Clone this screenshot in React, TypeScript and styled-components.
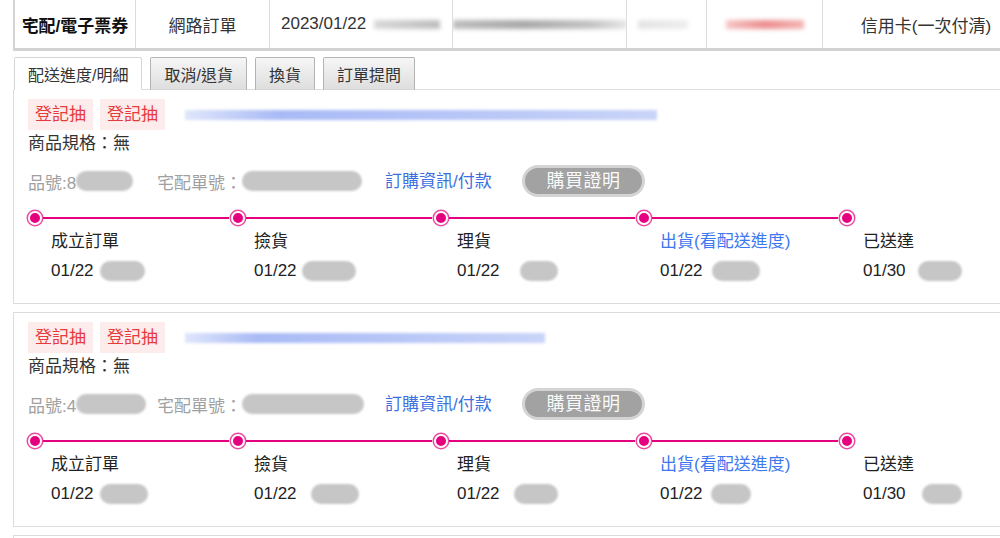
import React from "react";
import styled, { createGlobalStyle } from "styled-components";

const GlobalStyle = createGlobalStyle`
  html, body {
    margin: 0;
    padding: 0;
    background: #ffffff;
    overflow: hidden;
  }
  body {
    font-family: "Liberation Sans", "Noto Sans CJK TC", sans-serif;
    color: #333;
  }
`;

const Page = styled.div`
  width: 1030px;
  padding-left: 13px;
`;

/* ---------- order header row ---------- */

const HeaderRow = styled.div`
  display: flex;
  height: 48px;
  border-left: 2px solid #d4d4d4;
  border-bottom: 3px solid #d2d2d2;
  font-size: 17px;
`;

const Cell = styled.div<{ $w: number; $bold?: boolean; $left?: boolean }>`
  width: ${(p) => p.$w}px;
  flex-shrink: 0;
  display: flex;
  align-items: center;
  justify-content: ${(p) => (p.$left ? "flex-start" : "center")};
  padding-left: ${(p) => (p.$left ? "11px" : "0")};
  box-sizing: border-box;
  border-right: 1px solid #dcdcdc;
  font-weight: ${(p) => (p.$bold ? 700 : 400)};
  color: ${(p) => (p.$bold ? "#111" : "#333")};
  white-space: nowrap;
  overflow: hidden;
`;

const Smudge = styled.span<{ $w: number; $h?: number; $c: string; $ml?: number }>`
  display: inline-block;
  width: ${(p) => p.$w}px;
  height: ${(p) => p.$h ?? 9}px;
  margin-left: ${(p) => p.$ml ?? 0}px;
  background: ${(p) => p.$c};
  filter: blur(2px);
  flex-shrink: 0;
`;

/* ---------- tabs ---------- */

const TabRow = styled.div`
  display: flex;
  gap: 8px;
  margin-top: 6px;
  padding-left: 1px;
  position: relative;
  z-index: 1;
`;

const Tab = styled.div<{ $active?: boolean }>`
  height: 33px;
  box-sizing: border-box;
  padding: 0 13px;
  display: flex;
  align-items: center;
  font-size: 16px;
  color: #333;
  border: 1px solid ${(p) => (p.$active ? "#d6d6d6" : "#b4b4b4")};
  border-bottom: ${(p) => (p.$active ? "1px solid #fff" : "1px solid #d6d6d6")};
  background: ${(p) =>
    p.$active ? "#fff" : "linear-gradient(#f6f6f6, #dedede)"};
  border-radius: 2px 2px 0 0;
  margin-bottom: -1px;
`;

/* ---------- item card ---------- */

const Card = styled.div`
  border: 1px solid #dcdcdc;
  padding: 9px 0 18px 14px;
  margin-bottom: 8px;
`;

const BadgeRow = styled.div`
  display: flex;
  align-items: center;
  height: 31px;
  gap: 7px;
`;

const Badge = styled.span`
  height: 31px;
  line-height: 31px;
  padding: 0 7px;
  background: #fdecec;
  color: #e83a3a;
  font-size: 17px;
`;

const ProductName = styled(Smudge)`
  margin-left: 13px;
  filter: blur(1.5px);
`;

const Spec = styled.div`
  font-size: 17px;
  line-height: 28px;
  color: #333;
`;

const InfoRow = styled.div`
  display: flex;
  align-items: center;
  height: 32px;
  margin-top: 7px;
  font-size: 17px;
`;

const InfoItem = styled.div<{ $w: number }>`
  width: ${(p) => p.$w}px;
  flex-shrink: 0;
  display: flex;
  align-items: center;
  color: #a0a0a0;
  white-space: nowrap;
`;

const Pill = styled.span<{ $w: number; $ml?: number }>`
  display: inline-block;
  width: ${(p) => p.$w}px;
  height: 20px;
  margin-left: ${(p) => p.$ml ?? 0}px;
  border-radius: 10px;
  background: #c6c6c6;
  filter: blur(0.8px);
`;

const Link = styled.a<{ $w?: number }>`
  width: ${(p) => (p.$w ? `${p.$w}px` : "auto")};
  flex-shrink: 0;
  color: #3d6fe0;
  text-decoration: none;
  cursor: pointer;
  margin-top: -4px;
`;

const ProofButton = styled.button`
  width: 123px;
  height: 32px;
  box-sizing: border-box;
  border: 3px solid #d4d4d4;
  border-radius: 16px;
  background: #a2a2a2;
  color: #fafafa;
  font-family: inherit;
  font-size: 18px;
  letter-spacing: 0.5px;
  padding: 0;
  line-height: 24px;
`;

/* ---------- timeline ---------- */

const Timeline = styled.div`
  display: flex;
  margin-top: 12px;
  margin-left: -2px;
`;

const Step = styled.div<{ $last?: boolean }>`
  width: ${(p) => (p.$last ? "auto" : "203px")};
  flex-shrink: 0;
`;

const Track = styled.div`
  display: flex;
  align-items: center;
  height: 17px;
`;

const Dot = styled.span`
  width: 10px;
  height: 10px;
  flex-shrink: 0;
  border-radius: 50%;
  background: #e5007f;
  border: 2px solid #fff;
  box-shadow: 0 0 0 1.5px #ec4aa0;
  margin-left: 1.5px;
`;

const Line = styled.span`
  flex: 1;
  height: 2px;
  background: #e5007f;
  margin-left: 1.5px;
`;

const StepLabel = styled.div<{ $link?: boolean }>`
  padding-left: 25px;
  margin-top: 4px;
  font-size: 17px;
  line-height: 24px;
  color: ${(p) => (p.$link ? "#3d78ee" : "#222")};
  white-space: nowrap;
`;

const StepDate = styled.div`
  padding-left: 25px;
  margin-top: 3px;
  font-size: 17px;
  line-height: 28px;
  color: #222;
  display: flex;
  align-items: center;
  white-space: nowrap;
`;

type StepData = { label: string; date: string; pill: number; ml: number; link?: boolean };

const steps1: StepData[] = [
  { label: "成立訂單", date: "01/22", pill: 45, ml: 6 },
  { label: "撿貨", date: "01/22", pill: 54, ml: 5 },
  { label: "理貨", date: "01/22", pill: 38, ml: 20 },
  { label: "出貨(看配送進度)", date: "01/22", pill: 48, ml: 9, link: true },
  { label: "已送達", date: "01/30", pill: 44, ml: 12 },
];

const steps2: StepData[] = [
  { label: "成立訂單", date: "01/22", pill: 48, ml: 6 },
  { label: "撿貨", date: "01/22", pill: 48, ml: 14 },
  { label: "理貨", date: "01/22", pill: 44, ml: 14 },
  { label: "出貨(看配送進度)", date: "01/22", pill: 40, ml: 8, link: true },
  { label: "已送達", date: "01/30", pill: 40, ml: 16 },
];

type ItemProps = {
  nameWidth: number;
  itemNo: string;
  itemPill: number;
  shipPill: number;
  steps: StepData[];
};

const ItemCard = ({ nameWidth, itemNo, itemPill, shipPill, steps }: ItemProps) => (
  <Card>
    <BadgeRow>
      <Badge>登記抽</Badge>
      <Badge>登記抽</Badge>
      <ProductName
        $w={nameWidth}
        $h={10}
        $c="linear-gradient(90deg, #dfe6fb, #a9baf5 20%, #b8c6f7 60%, #c9d4f8)"
      />
    </BadgeRow>
    <Spec>商品規格：無</Spec>
    <InfoRow>
      <InfoItem $w={129}>
        品號:{itemNo}
        <Pill $w={itemPill} />
      </InfoItem>
      <InfoItem $w={228}>
        宅配單號：
        <Pill $w={shipPill} />
      </InfoItem>
      <Link $w={137}>訂購資訊/付款</Link>
      <ProofButton>購買證明</ProofButton>
    </InfoRow>
    <Timeline>
      {steps.map((s, i) => {
        const last = i === steps.length - 1;
        return (
          <Step key={i} $last={last}>
            <Track>
              <Dot />
              {!last && <Line />}
            </Track>
            <StepLabel $link={s.link}>{s.label}</StepLabel>
            <StepDate>
              {s.date}
              <Pill $w={s.pill} $ml={s.ml} />
            </StepDate>
          </Step>
        );
      })}
    </Timeline>
  </Card>
);

export default function App() {
  return (
    <Page>
      <GlobalStyle />
      <HeaderRow>
        <Cell $w={121} $bold>
          宅配/電子票券
        </Cell>
        <Cell $w={134}>網路訂單</Cell>
        <Cell $w={183} $left>
          2023/01/22
          <Smudge $w={66} $ml={8} $c="linear-gradient(90deg, #d8d8d8, #bdbdbd)" />
        </Cell>
        <Cell $w={174}>
          <Smudge
            $w={174}
            $c="linear-gradient(90deg, #bdbdbd, #a9a9a9 40%, #c4c4c4 80%, #e6e6e6)"
          />
        </Cell>
        <Cell $w={80} $left>
          <Smudge $w={50} $c="linear-gradient(90deg, #e4e4e4, #eeeeee)" />
        </Cell>
        <Cell $w={116}>
          <Smudge $w={78} $c="linear-gradient(90deg, #f6c6c6, #ec8f8f 50%, #f3b5b5)" />
        </Cell>
        <Cell $w={207}>信用卡(一次付清)</Cell>
      </HeaderRow>

      <TabRow>
        <Tab $active>配送進度/明細</Tab>
        <Tab>取消/退貨</Tab>
        <Tab>換貨</Tab>
        <Tab>訂單提問</Tab>
      </TabRow>

      <ItemCard nameWidth={472} itemNo="8" itemPill={57} shipPill={120} steps={steps1} />
      <ItemCard nameWidth={360} itemNo="4" itemPill={70} shipPill={122} steps={steps2} />
      <Card />
    </Page>
  );
}
